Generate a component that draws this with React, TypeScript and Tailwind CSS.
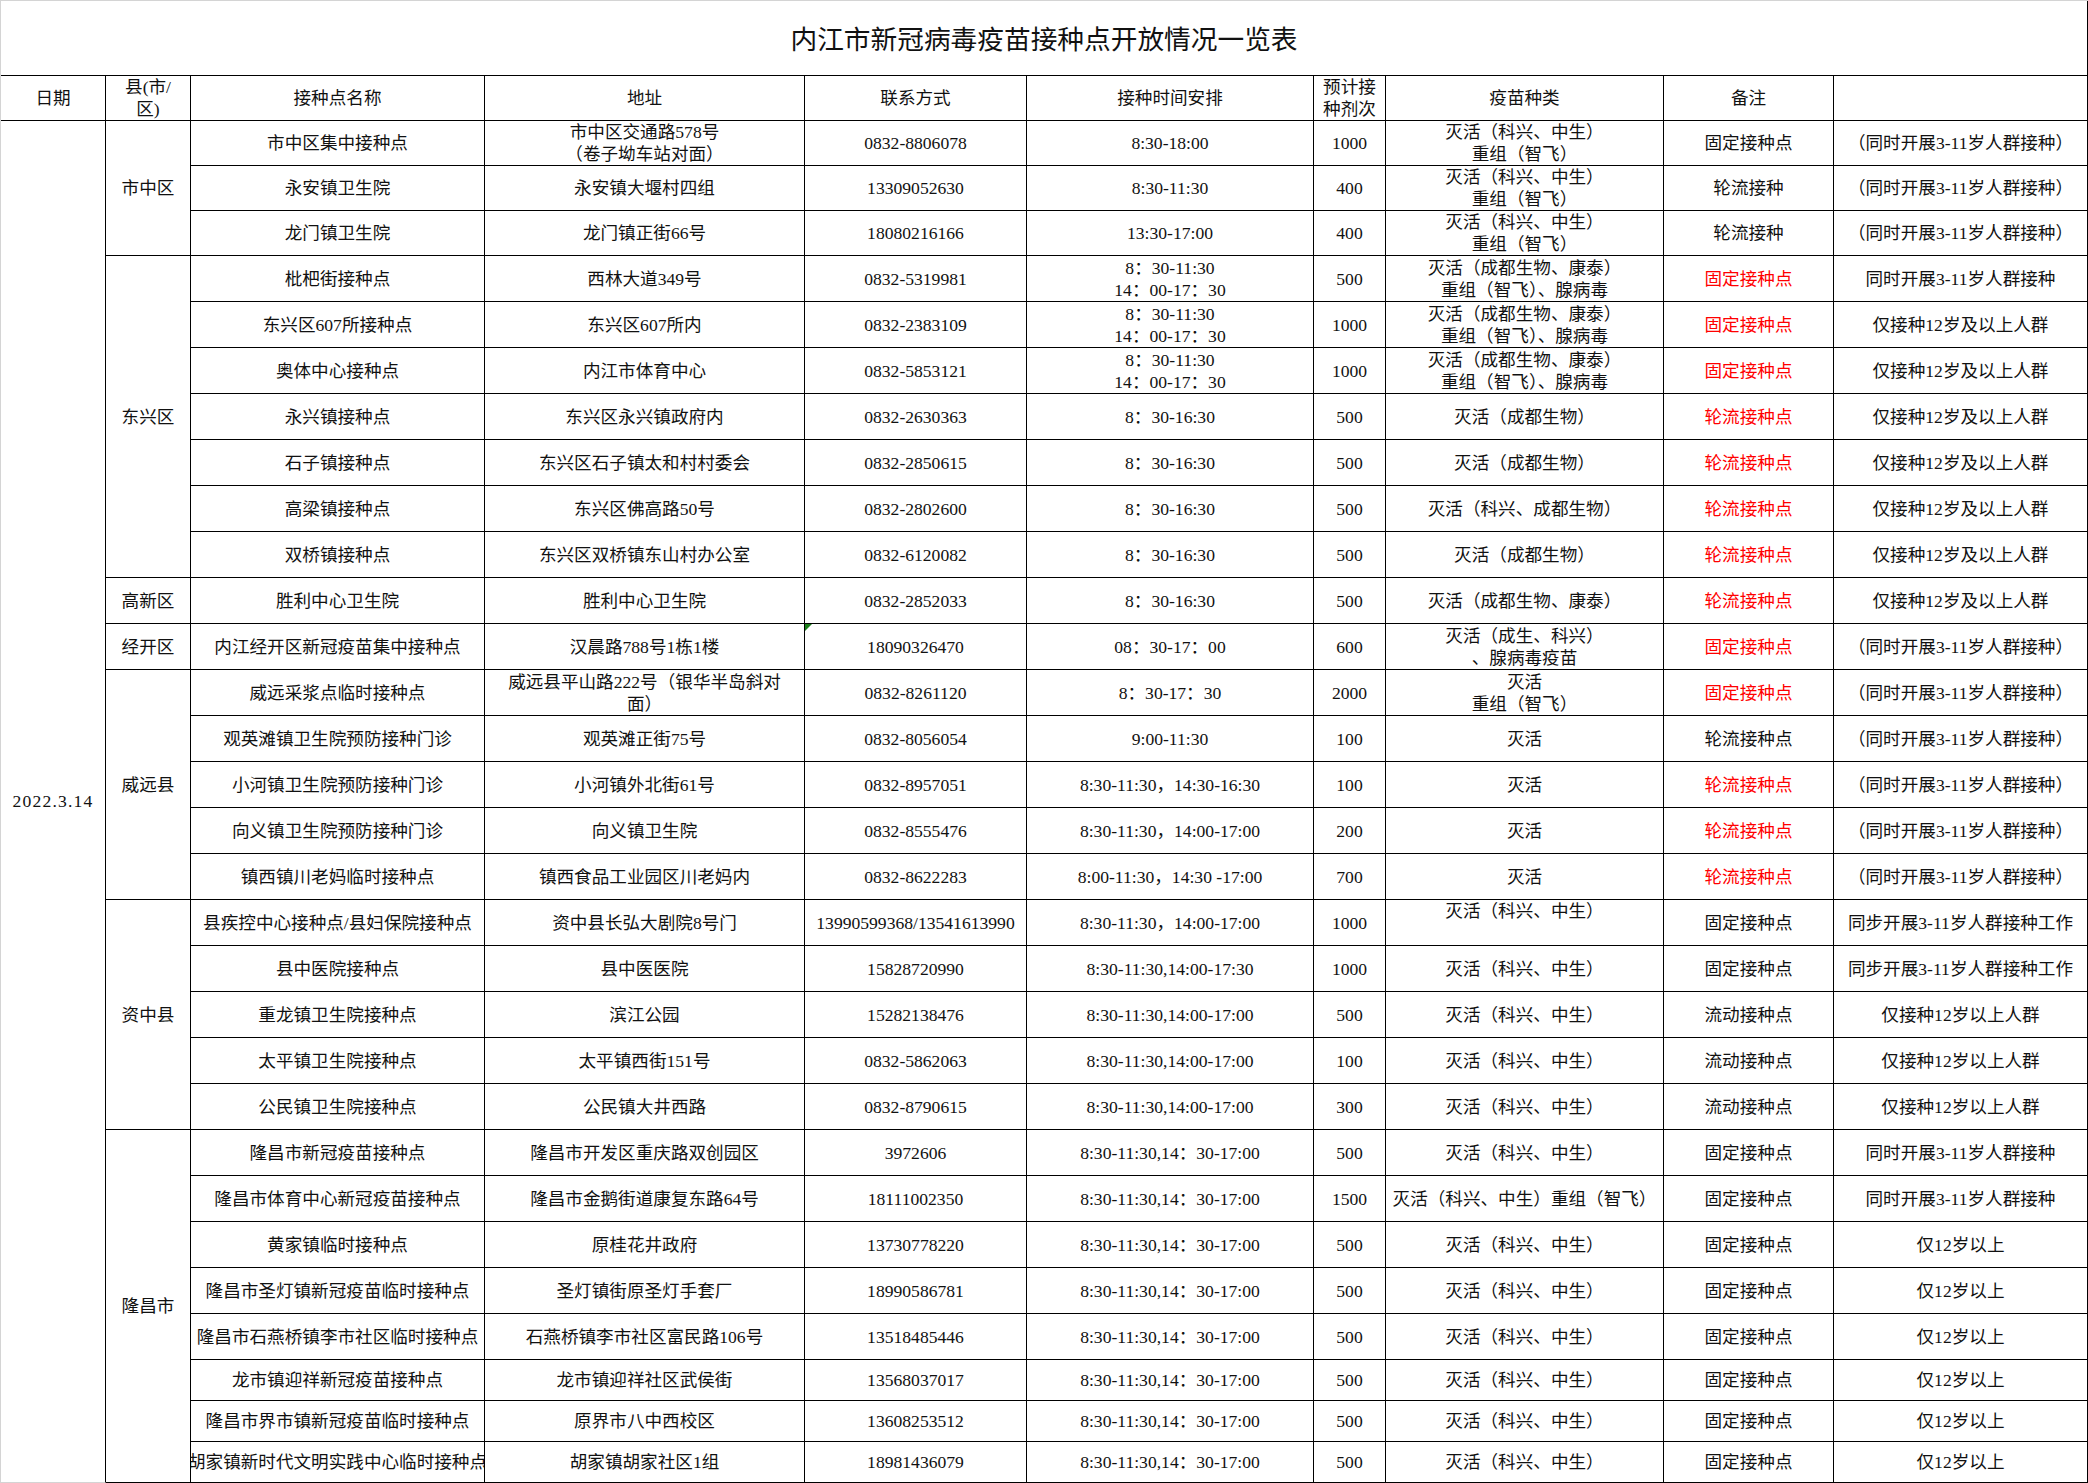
import React from "react";

type Item = {
  n: string;
  a: string | string[];
  c: string;
  t: string | string[];
  q: string;
  v: string | string[];
  b: string;
  red?: boolean;
  r: string;
  vTop?: boolean;
  tri?: boolean;
};

type Group = { d: string; span: string; items: Item[] };

const V1 = ["灭活（科兴、中生）", "重组（智飞）"];
const T2 = ["8：30-11:30", "14：00-17：30"];
const V2 = ["灭活（成都生物、康泰）", "重组（智飞）、腺病毒"];
const R1 = "（同时开展3-11岁人群接种）";
const R2 = "仅接种12岁及以上人群";
const KZ = "灭活（科兴、中生）";
const LT = "8:30-11:30,14：30-17:00";

const groups: Group[] = [
  {
    d: "市中区",
    span: "row-span-3",
    items: [
      { n: "市中区集中接种点", a: ["市中区交通路578号", "（卷子坳车站对面）"], c: "0832-8806078", t: "8:30-18:00", q: "1000", v: V1, b: "固定接种点", r: R1 },
      { n: "永安镇卫生院", a: "永安镇大堰村四组", c: "13309052630", t: "8:30-11:30", q: "400", v: V1, b: "轮流接种", r: R1 },
      { n: "龙门镇卫生院", a: "龙门镇正街66号", c: "18080216166", t: "13:30-17:00", q: "400", v: V1, b: "轮流接种", r: R1 },
    ],
  },
  {
    d: "东兴区",
    span: "row-span-7",
    items: [
      { n: "枇杷街接种点", a: "西林大道349号", c: "0832-5319981", t: T2, q: "500", v: V2, b: "固定接种点", red: true, r: "同时开展3-11岁人群接种" },
      { n: "东兴区607所接种点", a: "东兴区607所内", c: "0832-2383109", t: T2, q: "1000", v: V2, b: "固定接种点", red: true, r: R2 },
      { n: "奥体中心接种点", a: "内江市体育中心", c: "0832-5853121", t: T2, q: "1000", v: V2, b: "固定接种点", red: true, r: R2 },
      { n: "永兴镇接种点", a: "东兴区永兴镇政府内", c: "0832-2630363", t: "8：30-16:30", q: "500", v: "灭活（成都生物）", b: "轮流接种点", red: true, r: R2 },
      { n: "石子镇接种点", a: "东兴区石子镇太和村村委会", c: "0832-2850615", t: "8：30-16:30", q: "500", v: "灭活（成都生物）", b: "轮流接种点", red: true, r: R2 },
      { n: "高梁镇接种点", a: "东兴区佛高路50号", c: "0832-2802600", t: "8：30-16:30", q: "500", v: "灭活（科兴、成都生物）", b: "轮流接种点", red: true, r: R2 },
      { n: "双桥镇接种点", a: "东兴区双桥镇东山村办公室", c: "0832-6120082", t: "8：30-16:30", q: "500", v: "灭活（成都生物）", b: "轮流接种点", red: true, r: R2 },
    ],
  },
  {
    d: "高新区",
    span: "",
    items: [
      { n: "胜利中心卫生院", a: "胜利中心卫生院", c: "0832-2852033", t: "8：30-16:30", q: "500", v: "灭活（成都生物、康泰）", b: "轮流接种点", red: true, r: R2 },
    ],
  },
  {
    d: "经开区",
    span: "",
    items: [
      { n: "内江经开区新冠疫苗集中接种点", a: "汉晨路788号1栋1楼", c: "18090326470", t: "08：30-17：00", q: "600", v: ["灭活（成生、科兴）", "、腺病毒疫苗"], b: "固定接种点", red: true, r: R1, tri: true },
    ],
  },
  {
    d: "威远县",
    span: "row-span-5",
    items: [
      { n: "威远采浆点临时接种点", a: ["威远县平山路222号（银华半岛斜对", "面）"], c: "0832-8261120", t: "8：30-17：30", q: "2000", v: ["灭活", "重组（智飞）"], b: "固定接种点", red: true, r: R1 },
      { n: "观英滩镇卫生院预防接种门诊", a: "观英滩正街75号", c: "0832-8056054", t: "9:00-11:30", q: "100", v: "灭活", b: "轮流接种点", r: R1 },
      { n: "小河镇卫生院预防接种门诊", a: "小河镇外北街61号", c: "0832-8957051", t: "8:30-11:30，14:30-16:30", q: "100", v: "灭活", b: "轮流接种点", red: true, r: R1 },
      { n: "向义镇卫生院预防接种门诊", a: "向义镇卫生院", c: "0832-8555476", t: "8:30-11:30，14:00-17:00", q: "200", v: "灭活", b: "轮流接种点", red: true, r: R1 },
      { n: "镇西镇川老妈临时接种点", a: "镇西食品工业园区川老妈内", c: "0832-8622283", t: "8:00-11:30，14:30 -17:00", q: "700", v: "灭活", b: "轮流接种点", red: true, r: R1 },
    ],
  },
  {
    d: "资中县",
    span: "row-span-5",
    items: [
      { n: "县疾控中心接种点/县妇保院接种点", a: "资中县长弘大剧院8号门", c: "13990599368/13541613990", t: "8:30-11:30，14:00-17:00", q: "1000", v: KZ, vTop: true, b: "固定接种点", r: "同步开展3-11岁人群接种工作" },
      { n: "县中医院接种点", a: "县中医医院", c: "15828720990", t: "8:30-11:30,14:00-17:30", q: "1000", v: KZ, b: "固定接种点", r: "同步开展3-11岁人群接种工作" },
      { n: "重龙镇卫生院接种点", a: "滨江公园", c: "15282138476", t: "8:30-11:30,14:00-17:00", q: "500", v: KZ, b: "流动接种点", r: "仅接种12岁以上人群" },
      { n: "太平镇卫生院接种点", a: "太平镇西街151号", c: "0832-5862063", t: "8:30-11:30,14:00-17:00", q: "100", v: KZ, b: "流动接种点", r: "仅接种12岁以上人群" },
      { n: "公民镇卫生院接种点", a: "公民镇大井西路", c: "0832-8790615", t: "8:30-11:30,14:00-17:00", q: "300", v: KZ, b: "流动接种点", r: "仅接种12岁以上人群" },
    ],
  },
  {
    d: "隆昌市",
    span: "row-span-8",
    items: [
      { n: "隆昌市新冠疫苗接种点", a: "隆昌市开发区重庆路双创园区", c: "3972606", t: LT, q: "500", v: KZ, b: "固定接种点", r: "同时开展3-11岁人群接种" },
      { n: "隆昌市体育中心新冠疫苗接种点", a: "隆昌市金鹅街道康复东路64号", c: "18111002350", t: LT, q: "1500", v: "灭活（科兴、中生）重组（智飞）", b: "固定接种点", r: "同时开展3-11岁人群接种" },
      { n: "黄家镇临时接种点", a: "原桂花井政府", c: "13730778220", t: LT, q: "500", v: KZ, b: "固定接种点", r: "仅12岁以上" },
      { n: "隆昌市圣灯镇新冠疫苗临时接种点", a: "圣灯镇街原圣灯手套厂", c: "18990586781", t: LT, q: "500", v: KZ, b: "固定接种点", r: "仅12岁以上" },
      { n: "隆昌市石燕桥镇李市社区临时接种点", a: "石燕桥镇李市社区富民路106号", c: "13518485446", t: LT, q: "500", v: KZ, b: "固定接种点", r: "仅12岁以上" },
      { n: "龙市镇迎祥新冠疫苗接种点", a: "龙市镇迎祥社区武侯街", c: "13568037017", t: LT, q: "500", v: KZ, b: "固定接种点", r: "仅12岁以上" },
      { n: "隆昌市界市镇新冠疫苗临时接种点", a: "原界市八中西校区", c: "13608253512", t: LT, q: "500", v: KZ, b: "固定接种点", r: "仅12岁以上" },
      { n: "胡家镇新时代文明实践中心临时接种点", a: "胡家镇胡家社区1组", c: "18981436079", t: LT, q: "500", v: KZ, b: "固定接种点", r: "仅12岁以上" },
    ],
  },
];

const base =
  "flex flex-col items-center justify-center overflow-hidden whitespace-nowrap border-r border-b border-black text-center leading-[22px]";

function Lines({ v }: { v: string | string[] }) {
  const arr = Array.isArray(v) ? v : [v];
  return (
    <>
      {arr.map((s, i) => (
        <div key={i}>{s}</div>
      ))}
    </>
  );
}

function Cell({
  children,
  className = "",
}: {
  children?: React.ReactNode;
  className?: string;
}) {
  return <div className={`${base} ${className}`}>{children}</div>;
}

export default function App() {
  const headers = [
    "日期",
    ["县(市/", "区)"],
    "接种点名称",
    "地址",
    "联系方式",
    "接种时间安排",
    ["预计接", "种剂次"],
    "疫苗种类",
    "备注",
    "",
  ];
  return (
    <div className="w-[2088px] h-[1483px] overflow-hidden bg-white text-[#111] font-['Liberation_Serif','Noto_Sans_CJK_SC',serif] text-[17.6px]">
      <div className="grid grid-cols-[105px_85px_294px_320px_222px_287px_72px_278px_170px_254px] grid-rows-[75px_45px_repeat(3,45px)_repeat(24,46px)_repeat(3,41px)] border-l border-t border-[#d4d4d4] w-[2088px]">
        <div className="col-span-10 flex items-center justify-center border-r border-b border-black text-[26.7px] pt-[5px]">
          内江市新冠病毒疫苗接种点开放情况一览表
        </div>
        {headers.map((h, i) => (
          <Cell key={"h" + i}>
            <Lines v={h} />
          </Cell>
        ))}
        {groups.map((g, gi) => (
          <React.Fragment key={g.d}>
            {g.items.map((it, ii) => (
              <React.Fragment key={it.n}>
                {gi === 0 && ii === 0 && (
                  <div className="row-span-30 flex items-center justify-center border-r border-black border-b border-b-[#d4d4d4] whitespace-nowrap tracking-[1.2px]">
                    2022.3.14
                  </div>
                )}
                {ii === 0 && <Cell className={g.span}>{g.d}</Cell>}
                <Cell>{it.n}</Cell>
                <Cell>
                  <Lines v={it.a} />
                </Cell>
                <Cell className="relative">
                  {it.tri && (
                    <span className="absolute left-0 top-0 w-0 h-0 border-t-[7px] border-t-[#1a7f1a] border-r-[7px] border-r-transparent" />
                  )}
                  {it.c}
                </Cell>
                <Cell>
                  <Lines v={it.t} />
                </Cell>
                <Cell>{it.q}</Cell>
                <Cell className={it.vTop ? "justify-start" : ""}>
                  <Lines v={it.v} />
                </Cell>
                <Cell className={it.red ? "text-[#ff0000]" : ""}>{it.b}</Cell>
                <Cell>{it.r}</Cell>
              </React.Fragment>
            ))}
          </React.Fragment>
        ))}
      </div>
    </div>
  );
}
